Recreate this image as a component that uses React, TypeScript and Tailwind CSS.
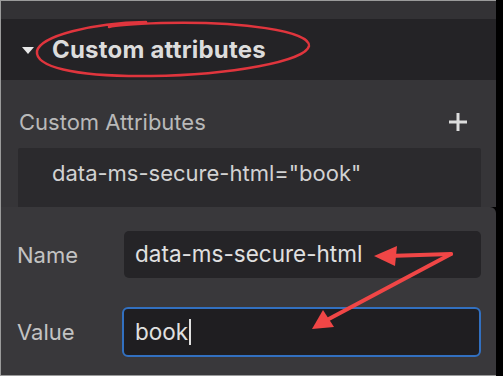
import React from "react";

export default function App() {
  const font = { fontFamily: "Inter, 'Noto Sans', sans-serif" };
  return (
    <div className="w-[503px] h-[376px] bg-black flex" style={font}>
      <div className="w-[496px] h-[376px] border-l border-t border-b border-[#9b9b9b] flex flex-col relative overflow-hidden">
        <div className="h-[18px] bg-[#333235]" />
        <div className="h-[61px] bg-[#242326] flex items-center pl-[21px]">
          <svg width="12" height="8" viewBox="0 0 12 8" className="mt-[2px]">
            <polygon points="0,0 12,0 6,7" fill="#e8e8e8" />
          </svg>
          <span className="ml-[18px] text-[24px] leading-none font-bold text-[#dcdcdc] tracking-[0.2px]">Custom attributes</span>
        </div>
        <div className="h-[127px] bg-[#363538] flex flex-col">
          <div className="flex items-center justify-between pl-[18px] pr-[27px] h-[68px] pt-[16px]">
            <span className="text-[22px] leading-none text-[#b9b9b9]">Custom Attributes</span>
            <svg width="22" height="22" viewBox="0 0 22 22">
              <path d="M11 2v18M2 11h18" stroke="#dcdcdc" strokeWidth="3" />
            </svg>
          </div>
          <div className="mx-[17px] mr-[15px] flex-1 bg-[#2b2a2d] rounded-t-[2px] flex items-start pt-[14px] pl-[34px]">
            <span className="text-[22px] leading-none text-[#d2d2d2]">data-ms-secure-html="book"</span>
          </div>
        </div>
        <div className="flex-1 bg-[#39383b] rounded-tr-[6px] flex flex-col pt-[24px] pl-[16px] pr-[15px] gap-[29px]">
          <div className="flex items-center">
            <span className="w-[107px] text-[22px] leading-none text-[#c3c3c3]">Name</span>
            <div className="flex-1 h-[47px] bg-[#252427] rounded-[5px] flex items-center pl-[11px]">
              <span className="text-[22.5px] leading-none text-[#e0e0e0]">data-ms-secure-html</span>
            </div>
          </div>
          <div className="flex items-center">
            <span className="w-[105px] text-[22px] leading-none text-[#c3c3c3]">Value</span>
            <div className="flex-1 h-[50px] bg-[#1f1e21] rounded-[6px] border-2 border-[#3270c0] flex items-center pl-[11px]">
              <span className="text-[22.5px] leading-none text-[#e0e0e0]">book</span>
              <span className="w-[2px] h-[26px] bg-[#e0e0e0] ml-[1px]" />
            </div>
          </div>
        </div>
        <svg className="absolute left-0 top-0 pointer-events-none" width="496" height="376" viewBox="0 0 496 376">
          <path d="M145 21 C 90 22, 40 35, 36 50 C 34 65, 70 76, 150 75 C 230 74, 305 60, 308 45 C 310 30, 240 20, 160 22 C 130 23, 115 24, 108 26" fill="none" stroke="#e0353d" strokeWidth="2.5" strokeLinecap="round" />
          <g stroke="#f04646" strokeWidth="4" strokeLinecap="round" fill="#f04646">
            <line x1="450" y1="253" x2="387" y2="255" />
            <line x1="450" y1="253" x2="324" y2="320" />
          </g>
          <polygon points="373,255 396,245 394,265" fill="#f04646" />
          <polygon points="311,328 322,309 333,326" fill="#f04646" />
        </svg>
      </div>
    </div>
  );
}
